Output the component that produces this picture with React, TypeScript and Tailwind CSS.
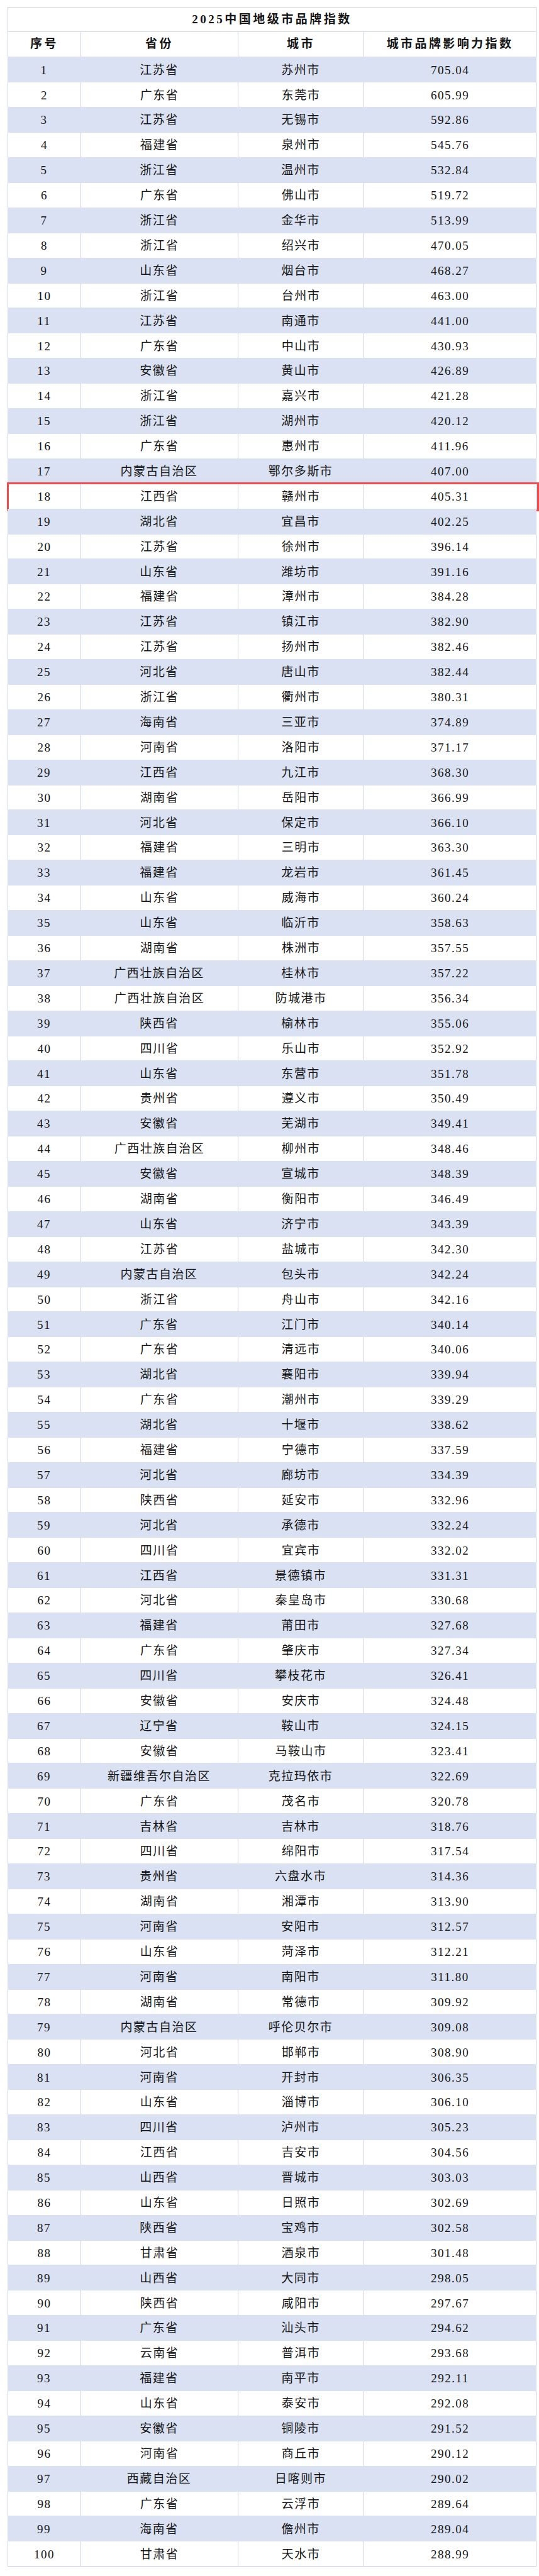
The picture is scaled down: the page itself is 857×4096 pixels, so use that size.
import React from "react";

const raw = `江苏省,苏州市,705.04
广东省,东莞市,605.99
江苏省,无锡市,592.86
福建省,泉州市,545.76
浙江省,温州市,532.84
广东省,佛山市,519.72
浙江省,金华市,513.99
浙江省,绍兴市,470.05
山东省,烟台市,468.27
浙江省,台州市,463.00
江苏省,南通市,441.00
广东省,中山市,430.93
安徽省,黄山市,426.89
浙江省,嘉兴市,421.28
浙江省,湖州市,420.12
广东省,惠州市,411.96
内蒙古自治区,鄂尔多斯市,407.00
江西省,赣州市,405.31
湖北省,宜昌市,402.25
江苏省,徐州市,396.14
山东省,潍坊市,391.16
福建省,漳州市,384.28
江苏省,镇江市,382.90
江苏省,扬州市,382.46
河北省,唐山市,382.44
浙江省,衢州市,380.31
海南省,三亚市,374.89
河南省,洛阳市,371.17
江西省,九江市,368.30
湖南省,岳阳市,366.99
河北省,保定市,366.10
福建省,三明市,363.30
福建省,龙岩市,361.45
山东省,威海市,360.24
山东省,临沂市,358.63
湖南省,株洲市,357.55
广西壮族自治区,桂林市,357.22
广西壮族自治区,防城港市,356.34
陕西省,榆林市,355.06
四川省,乐山市,352.92
山东省,东营市,351.78
贵州省,遵义市,350.49
安徽省,芜湖市,349.41
广西壮族自治区,柳州市,348.46
安徽省,宣城市,348.39
湖南省,衡阳市,346.49
山东省,济宁市,343.39
江苏省,盐城市,342.30
内蒙古自治区,包头市,342.24
浙江省,舟山市,342.16
广东省,江门市,340.14
广东省,清远市,340.06
湖北省,襄阳市,339.94
广东省,潮州市,339.29
湖北省,十堰市,338.62
福建省,宁德市,337.59
河北省,廊坊市,334.39
陕西省,延安市,332.96
河北省,承德市,332.24
四川省,宜宾市,332.02
江西省,景德镇市,331.31
河北省,秦皇岛市,330.68
福建省,莆田市,327.68
广东省,肇庆市,327.34
四川省,攀枝花市,326.41
安徽省,安庆市,324.48
辽宁省,鞍山市,324.15
安徽省,马鞍山市,323.41
新疆维吾尔自治区,克拉玛依市,322.69
广东省,茂名市,320.78
吉林省,吉林市,318.76
四川省,绵阳市,317.54
贵州省,六盘水市,314.36
湖南省,湘潭市,313.90
河南省,安阳市,312.57
山东省,菏泽市,312.21
河南省,南阳市,311.80
湖南省,常德市,309.92
内蒙古自治区,呼伦贝尔市,309.08
河北省,邯郸市,308.90
河南省,开封市,306.35
山东省,淄博市,306.10
四川省,泸州市,305.23
江西省,吉安市,304.56
山西省,晋城市,303.03
山东省,日照市,302.69
陕西省,宝鸡市,302.58
甘肃省,酒泉市,301.48
山西省,大同市,298.05
陕西省,咸阳市,297.67
广东省,汕头市,294.62
云南省,普洱市,293.68
福建省,南平市,292.11
山东省,泰安市,292.08
安徽省,铜陵市,291.52
河南省,商丘市,290.12
西藏自治区,日喀则市,290.02
广东省,云浮市,289.64
海南省,儋州市,289.04
甘肃省,天水市,288.99`;

const rows = raw.split("\n").map((l, i) => {
  const [p, c, v] = l.split(",");
  return { n: i + 1, p, c, v };
});

const grid = "grid grid-cols-[116px_250px_200px_275px]";

function Row({ r }: { r: { n: number; p: string; c: string; v: string } }) {
  const blue = r.n % 2 === 1;
  const cell = blue
    ? "flex items-center justify-center pt-[2px]"
    : "flex items-center justify-center border-l border-[#c9d1e3] pt-[2px]";
  return (
    <div
      className={
        blue
          ? `${grid} relative h-[41px] bg-[#d9e1f2]`
          : `${grid} relative h-[38.8px] bg-white`
      }
    >
      <div className={cell}>{r.n}</div>
      <div className={cell}>{r.p}</div>
      <div className={cell}>{r.c}</div>
      <div className={blue ? cell : `${cell} border-r`}>{r.v}</div>
      {r.n === 18 && (
        <div className="pointer-events-none absolute top-[-3px] bottom-[-4px] left-[-1px] right-[-4px] border-[3px] border-[#f04a4a]" />
      )}
    </div>
  );
}

export default function App() {
  return (
    <div className="min-h-screen bg-white pt-[11px] pl-[12px] font-['Liberation_Serif','Noto_Sans_CJK_SC',serif] text-[#151515]">
      <div className="w-[841px] border-b border-[#c9d1e3]">
        <div className="flex h-[39.7px] items-center justify-center border border-[#c9d1e3] text-[19px] font-bold tracking-[3.5px]">
          2025中国地级市品牌指数
        </div>
        <div className={`${grid} h-[39.7px] text-[19px] font-bold tracking-[3.4px]`}>
          <div className="flex items-center justify-center border-l border-[#c9d1e3]">序号</div>
          <div className="flex items-center justify-center border-l border-[#c9d1e3]">省份</div>
          <div className="flex items-center justify-center border-l border-[#c9d1e3]">城市</div>
          <div className="flex items-center justify-center border-l border-r border-[#c9d1e3]">城市品牌影响力指数</div>
        </div>
        <div className="text-[19px] tracking-[1.5px]">
          {rows.map((r) => (
            <Row key={r.n} r={r} />
          ))}
        </div>
      </div>
    </div>
  );
}
